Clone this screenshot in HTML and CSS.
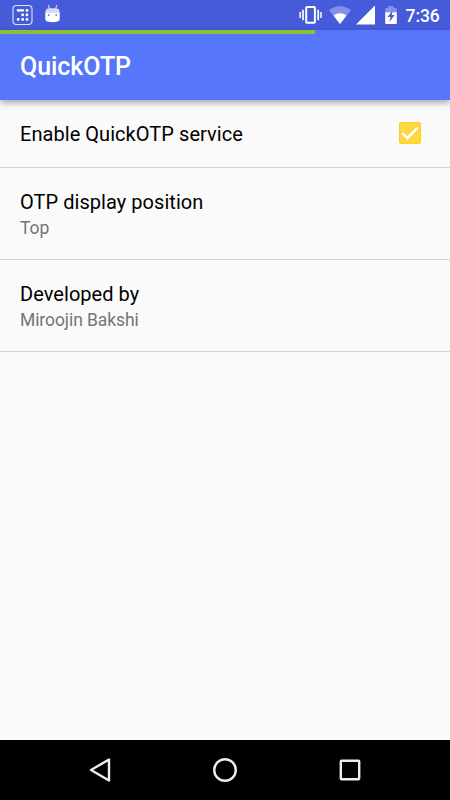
FILE: index.html
```html
<!DOCTYPE html>
<html lang="en">
<head>
<meta charset="utf-8">
<title>QuickOTP</title>
<link rel="stylesheet" href="styles.css">
</head>
<body>
<div class="screen">
  <div class="status">
    <svg class="status-left" width="70" height="30" viewBox="0 0 70 30">
      <rect x="13" y="5.5" width="19" height="19" rx="3.5" fill="none" stroke="#dfe4fc" stroke-width="1.1"/>
      <g fill="#fff">
        <rect x="16.7" y="9.2" width="7.4" height="2.4" rx=".8"/>
        <rect x="25.6" y="9" width="2.7" height="2.7" rx=".8"/>
        <rect x="21.3" y="13.6" width="2.7" height="2.7" rx="1"/>
        <rect x="25.6" y="13.6" width="2.7" height="2.7" rx="1"/>
        <rect x="16.8" y="18" width="2.7" height="2.7" rx="1"/>
        <rect x="21.3" y="18" width="2.7" height="2.7" rx="1"/>
        <rect x="25.6" y="18" width="2.7" height="2.7" rx="1"/>
      </g>
      <path d="M48.3 5.2l1.3 4M56.8 5.2l-1.3 4" stroke="#dfe4fc" stroke-width="1.1"/>
      <path d="M45.3 12.7Q45.3 8.3 49.5 8.3h6q4.2 0 4.2 4.4z" fill="#d3daf9"/>
      <path d="M45.3 12.5h14.4v6.5q0 2.2-2.2 2.6-2 .6-5 .6t-5-.6q-2.2-.4-2.2-2.6z" fill="#fff"/>
      <circle cx="48.8" cy="15" r="1" fill="#7688e7"/><circle cx="56.2" cy="15" r="1" fill="#7688e7"/>
    </svg>
    <svg class="status-right" width="104" height="30" viewBox="296 0 104 30">
      <rect x="306.2" y="7.1" width="8.7" height="15.6" rx=".8" fill="none" stroke="#fff" stroke-width="2"/>
      <path d="M303 9.7v10.6M318.2 9.7v10.6" stroke="#fff" stroke-width="1.7"/>
      <path d="M300.2 12v6M321 12v6" stroke="#fff" stroke-width="1.5"/>
      <path d="M329.1 10.2Q334 6.2 340 6.2T350.9 10.2L340 24z" fill="#8292e9"/>
      <path d="M333.5 15.4Q336.3 13.2 340 13.2T346.5 15.4L340 24z" fill="#fff"/>
      <path d="M375 5.5V24.5H356z" fill="#fff"/>
      <path d="M385.2 12.5V8.8q0-.8.8-.8h2.3V6h5.2v2h2.5q.8 0 .8.8v3.7z" fill="#8292e9"/>
      <path d="M385.2 12.2h11.6v11q0 .8-.8.8h-10q-.8 0-.8-.8z" fill="#fff"/>
      <path d="M392.6 10.2l-5 6.9h2.9l-1.1 4.8 5.3-7h-3z" fill="#465bd8"/>
    </svg>
    <span class="clock">7:36</span>
  </div>
  <header class="appbar">
    <div class="progress"></div>
    <h1>QuickOTP</h1>
  </header>
  <main>
    <section class="row row-single">
      <div class="title">Enable QuickOTP service</div>
      <svg class="check" width="24" height="24" viewBox="0 0 24 24">
        <rect x="1.5" y="1.5" width="21" height="21" rx="1.5" fill="#ffd740" stroke="#ffd11c"/>
        <path d="M4.3 12.2l5 5L19.8 6.7" fill="none" stroke="#fff" stroke-width="2.5"/>
      </svg>
    </section>
    <section class="row">
      <div class="title">OTP display position</div>
      <div class="summary">Top</div>
    </section>
    <section class="row">
      <div class="title">Developed by</div>
      <div class="summary">Miroojin Bakshi</div>
    </section>
  </main>
  <nav class="navbar">
    <svg width="450" height="60" viewBox="0 0 450 60" fill="none" stroke="#eee" stroke-width="2.4">
      <path d="M109 19.5v21L91 30z" stroke-linejoin="round"/>
      <circle cx="225" cy="30" r="10.8"/>
      <rect x="340.8" y="20.8" width="18.4" height="18.4" rx=".6"/>
    </svg>
  </nav>
</div>
</body>
</html>
```

FILE: styles.css
```css
body {
  margin: 0;
  font-family: Roboto, sans-serif;
}

.screen {
  display: flex;
  flex-direction: column;
  width: 450px;
  height: 800px;
  overflow: hidden;
  background: #fafafa;
}

.status {
  display: flex;
  height: 30px;
  background: #455bd9;
}

.status-right {
  margin-left: 226px;
}

.clock {
  margin-left: 5.6px;
  color: #fff;
  font-size: 17.5px;
  font-weight: 500;
  letter-spacing: -.1px;
  line-height: 32px;
}

.appbar {
  height: 70px;
  background: #5677fc;
  box-shadow: 0 3px 6px rgba(0, 0, 0, .32);
}

.progress {
  width: 315px;
  height: 4px;
  background: #8bc034;
}

h1 {
  margin: 0;
  padding-left: 20px;
  color: #fff;
  font-size: 25px;
  font-weight: 500;
  letter-spacing: -.05px;
  line-height: 65px;
}

main {
  flex: 1;
}

.row {
  box-sizing: border-box;
  height: 92px;
  padding: 22px 28px 0 20px;
  border-bottom: 1px solid #d5d5d5;
}

.row-single {
  display: flex;
  justify-content: space-between;
  height: 68px;
}

.title {
  color: #000;
  font-size: 20px;
  letter-spacing: .05px;
  line-height: 25px;
}

.summary {
  color: #757575;
  font-size: 17.5px;
  letter-spacing: -.08px;
  line-height: 26px;
}

.check {
  margin-top: -1px;
}

.navbar {
  height: 60px;
  background: #000;
}
```
